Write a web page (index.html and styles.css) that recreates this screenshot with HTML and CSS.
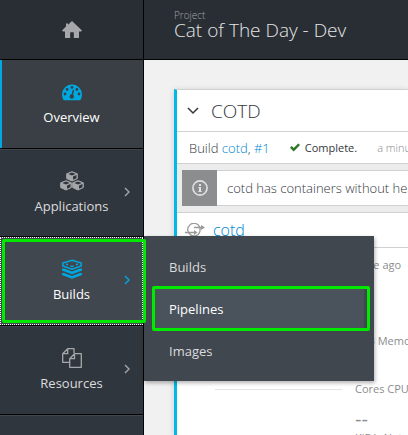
FILE: index.html
```html
<!DOCTYPE html>
<html lang="en">
<head>
<meta charset="utf-8">
<meta name="viewport" content="width=device-width, initial-scale=1">
<title>Cat of The Day - Dev</title>
<link rel="stylesheet" href="styles.css">
</head>
<body>
<div class="app">
  <header class="topbar">
    <a class="home" href="#" aria-label="Home">
      <svg width="20" height="18" viewBox="0 0 20 18"><path fill="#a5a7aa" d="M10 0 20 9.4 19 10.6H17V17H11.8V11.2H8.2V17H3V10.6H1L0 9.4 4 5.6V2.4H6V3.8Z"/></svg>
    </a>
    <div class="project">
      <span class="project-label">Project</span>
      <h1 class="project-name">Cat of The Day - Dev</h1>
    </div>
  </header>
  <nav class="sidebar">
    <ul class="nav">
      <li class="nav-item is-current">
        <a class="nav-link" href="#">
          <svg class="nav-icon" width="20" height="20" viewBox="0 0 20 20"><path fill="currentColor" d="M1.6 18A10 10 0 1 1 18.400 18Q18 18.300 17.500 18.300H2.500Q2 18.300 1.600 18Z"/><g fill="#393f45"><circle cx="3" cy="12" r="1.400"/><circle cx="5.100" cy="7.500" r="1.400"/><circle cx="10" cy="5.400" r="1.400"/><circle cx="14.900" cy="7.500" r="1.400"/><circle cx="17" cy="12" r="1.400"/><circle cx="9.800" cy="14.500" r="2.200"/></g><path d="M10 14 11.300 8.500" stroke="#393f45" stroke-width="1.400" stroke-linecap="round"/></svg>
          <span>Overview</span>
        </a>
      </li>
      <li class="nav-item">
        <a class="nav-link" href="#">
          <svg class="nav-icon" width="26" height="20" viewBox="0 0 26 20"><defs><g id="cube"><path fill="currentColor" stroke="currentColor" stroke-linejoin="round" d="M6 .7 11.300 2.800V7.600L6 10 .7 7.600V2.800Z"/><path fill="#30363d" d="M6 1.500 9.700 2.900 6 4.400 2.300 2.900ZM7 5.500 10.500 4V7.200L7 8.800Z"/></g></defs><use href="#cube" x="7"/><use href="#cube" x="1" y="9"/><use href="#cube" x="13" y="9"/></svg>
          <span>Applications</span>
          <svg class="chevron" width="6" height="10" viewBox="0 0 6 10"><path d="M1 1 5 5 1 9"/></svg>
        </a>
      </li>
      <li class="nav-item is-open">
        <a class="nav-link" href="#" aria-expanded="true">
          <svg class="nav-icon" width="20" height="20" viewBox="0 0 20 20" fill="none" stroke="currentColor"><path d="M10 1.200 19.200 4V7L10 10.200 .8 7V4Z" stroke-width="1.500"/><path d="M4 5 6 5.800M8.500 7 10 7.500 11.500 7M14 5.800 16 5" stroke-width="1.400"/><path fill="currentColor" stroke="none" d="M0 9.800 2 9.400 10 12.400 18 9.400 20 9.800V11.600L10 15.200 0 11.600ZM0 14.300 2 13.900 10 16.900 18 13.900 20 14.300V16.100L10 19.700 0 16.100Z"/></svg>
          <span>Builds</span>
          <svg class="chevron" width="6" height="10" viewBox="0 0 6 10"><path d="M1 1 5 5 1 9"/></svg>
        </a>
        <ul class="flyout">
          <li><a href="#">Builds</a></li>
          <li class="is-picked"><a href="#">Pipelines</a></li>
          <li><a href="#">Images</a></li>
        </ul>
      </li>
      <li class="nav-item">
        <a class="nav-link" href="#">
          <svg class="nav-icon" width="20" height="20" viewBox="0 0 20 20" fill="none" stroke="currentColor" stroke-width="1.300" stroke-linejoin="round"><path d="M7.200 14.300H.7V5.700L5.700.7H12V5M.7 5.700H5.700V.7M12.500 5.700H19.300V19.300H7.700V10.700ZM7.700 10.700H12.500V5.700"/></svg>
          <span>Resources</span>
          <svg class="chevron" width="6" height="10" viewBox="0 0 6 10"><path d="M1 1 5 5 1 9"/></svg>
        </a>
      </li>
    </ul>
  </nav>
  <main class="content">
    <section class="panel">
      <header class="panel-head">
        <svg width="12" height="8" viewBox="0 0 12 8" fill="none" stroke="#33383d" stroke-width="1.500"><path d="M1 1 6 6 11 1"/></svg>
        <h2>COTD</h2>
      </header>
      <div class="build">
        <span>Build <a href="#">cotd</a>, <a href="#">#1</a></span>
        <span class="status">
          <svg width="10" height="9" viewBox="0 0 10 9"><path fill="#2d7623" d="M0 4.800 1.700 3.100 3.700 5 8.300.4 10 2.100 3.700 8.400Z"/></svg>
          Complete.
        </span>
        <span class="time">a minute ago</span>
      </div>
      <div class="notice">
        <div class="alert">
          <span class="alert-icon"><svg width="16" height="16" viewBox="0 0 16 16"><circle cx="8" cy="8" r="7.100" fill="none" stroke="#e2e2e2" stroke-width="1.600"/><path fill="#e2e2e2" d="M7 4H9V6H7ZM6.500 7H9V11H9.700V12H6.300V11H7V8H6.500Z"/></svg></span>
          <span>cotd has containers without health checks</span>
        </div>
      </div>
      <div class="service">
        <svg width="20" height="14" viewBox="0 0 20 14" fill="none" stroke="#999" stroke-width="1.300"><path d="M14.700 4A6.300 6.300 0 1 0 15 8.500M15 8.500V5M9 4.500H17M0 9.500H10"/><path fill="#999" stroke="none" d="M16 2 20 4.500 16 7ZM9 7 12.500 9.500 9 12Z"/></svg>
        <a href="#">cotd</a>
      </div>
      <div class="metrics">
        <p class="age">a minute ago</p>
        <div class="metric">
          <span class="spark"></span>
          <p>MiB Memory</p>
        </div>
        <div class="metric">
          <span class="spark"></span>
          <p>Cores CPU</p>
        </div>
        <div class="metric network">
          <p><b>--</b><br>KiB/s Network</p>
        </div>
      </div>
    </section>
  </main>
</div>
</body>
</html>
```
FILE: styles.css
```css
* { box-sizing: border-box; }
body {
  margin: 0;
  font: 300 13px/20px "Open Sans", sans-serif;
  color: #33383d;
}
a { color: #0088ce; text-decoration: none; }
h1, h2, p, ul { margin: 0; padding: 0; font-weight: 300; }
ul { list-style: none; }
svg { display: block; flex: none; }

.app {
  display: grid;
  grid-template: 60px 1fr / 144px 1fr;
  height: 100vh;
  overflow: hidden;
}
.topbar {
  grid-column: 1 / -1;
  display: flex;
  background: #292e34;
  border-bottom: 1px solid #030303;
}
.home {
  display: flex;
  align-items: center;
  justify-content: center;
  width: 144px;
  border-right: 1px solid #030303;
}
.project { padding: 9px 0 0 30px; color: #e4e5e6; }
.project-label { display: block; font-size: 10px; line-height: 12px; color: #a5a7aa; }
.project-name { font-size: 19px; line-height: 18px; white-space: nowrap; }

.sidebar {
  position: relative;
  z-index: 2;
  background: #30363d;
  border-right: 1px solid #030303;
}
.nav-item {
  position: relative;
  border-bottom: 1px solid #030303;
  box-shadow: 0 1px #40464d;
}
.nav-link {
  display: flex;
  flex-direction: column;
  align-items: center;
  gap: 5px;
  height: 88px;
  padding-top: 22px;
  color: #dbdcdd;
  font-weight: 400;
}
.nav-item:nth-child(2) .nav-link { height: 87px; }
.nav-icon { color: #a5a7aa; }
.chevron {
  position: absolute;
  right: 13px;
  top: 38px;
  fill: none;
  stroke: #a5a7aa;
  stroke-width: 1.4;
}
.is-current { background: #393f45; box-shadow: inset 2px 0 #00a8e1, 0 1px #40464d; }
.is-current .nav-link, .is-open .nav-link { color: #fff; }
.is-current .nav-icon, .is-open .nav-icon { color: #00a8e1; }
.is-open { background: #41474f; }
.is-open .nav-link { outline: 1px dotted #fff; outline-offset: -1px; }
.is-open .chevron { stroke: #00a8e1; }
.is-open::after {
  content: "";
  position: absolute;
  z-index: 1;
  inset: 2px -3px 2px 2px;
  border: 3px solid #00ea00;
  border-radius: 2px;
  pointer-events: none;
}
.flyout {
  position: absolute;
  top: -1px;
  left: 144px;
  width: 230px;
  padding: 10px 10px 9px;
  background: #41474f;
  box-shadow: 1px 2px 4px rgba(0, 0, 0, .3);
}
.flyout li { position: relative; }
.flyout a { display: block; padding: 11px 15px; color: #dbdcdd; font-weight: 400; }
.flyout .is-picked { background: #4a525b; }
.flyout .is-picked a { color: #fff; }
.is-picked::after {
  content: "";
  position: absolute;
  inset: -2px -6px -1px -2px;
  border: 3px solid #00ea00;
  border-radius: 2px;
  pointer-events: none;
}

.content {
  display: flex;
  min-width: 0;
  padding: 29px 0 0 30px;
  background: #f1f1f1;
  overflow: hidden;
}
.panel {
  flex: 1;
  min-width: 0;
  background: #fff;
  border-top: 1px solid #d1d1d1;
  border-left: 3px solid #00b9e4;
  box-shadow: 0 1px 6px rgba(0, 0, 0, .15);
  white-space: nowrap;
}
.panel-head {
  display: flex;
  align-items: center;
  gap: 12px;
  height: 42px;
  padding-left: 10px;
  border-bottom: 1px solid #d1d1d1;
}
.panel-head h2 { font-size: 19px; }
.build {
  display: flex;
  align-items: center;
  gap: 20px;
  height: 32px;
  padding-left: 12px;
  border-bottom: 1px solid #d1d1d1;
}
.status { display: flex; align-items: center; gap: 5px; font-size: 11px; font-weight: 400; }
.time { font-size: 11px; color: #888; }
.notice {
  padding: 6px 0 6px 5px;
  background: #ececec;
  border-bottom: 1px solid #d1d1d1;
}
.alert {
  display: flex;
  align-items: center;
  gap: 10px;
  height: 36px;
  background: #fff;
  border: solid #d1d1d1;
  border-width: 1px 0;
}
.alert-icon {
  display: flex;
  flex: none;
  align-items: center;
  justify-content: center;
  width: 35px;
  height: 36px;
  background: #8b8d8f;
}
.service {
  display: flex;
  align-items: center;
  gap: 8px;
  height: 35px;
  padding-left: 8px;
  border-bottom: 1px solid #d1d1d1;
  font-size: 16px;
}
.metrics { padding: 7px 0 0 38px; font-size: 11px; }
.metrics p { font-weight: 400; color: #8b8d8f; }
.age { padding-left: 119px; }
.metric { display: flex; align-items: center; gap: 13px; margin-top: 28px; }
.age + .metric { margin-top: 56px; }
.spark { flex: none; width: 127px; height: 1px; background: #e4e4e4; }
.network { margin-top: 12px; padding-left: 140px; line-height: 16px; }
.network b { font-size: 20px; font-weight: 400; }
```
